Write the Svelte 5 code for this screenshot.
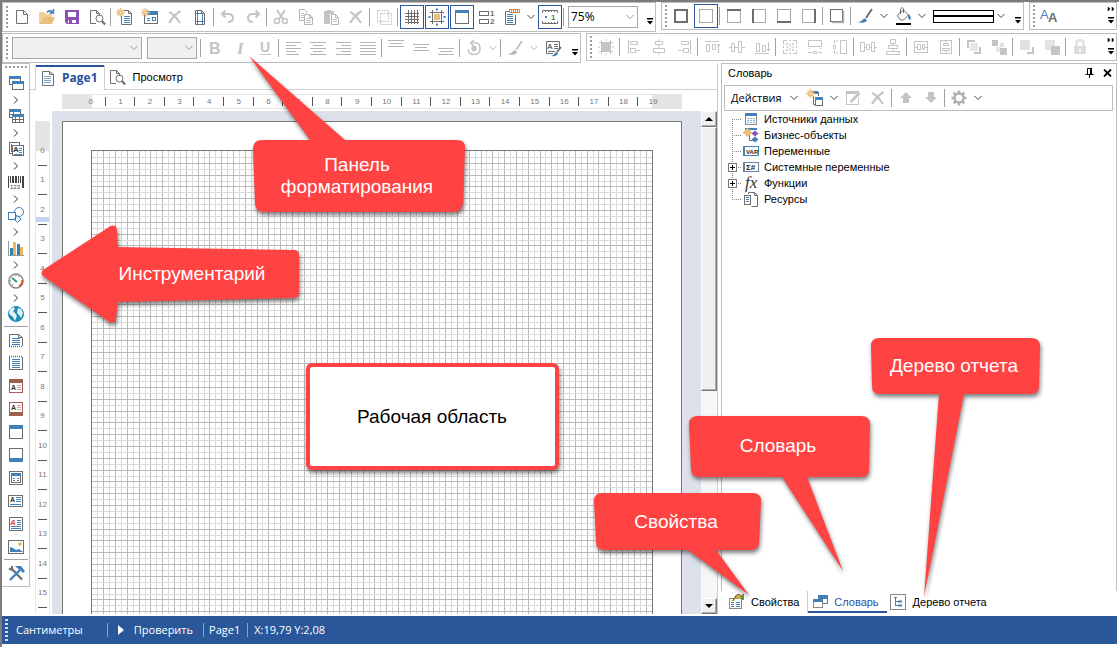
<script>
  const D = '#6e6e6e', B = '#4380b8', G = '#c4c4c4', T = '#e9bf7c';
  const s = (d, c = D, w = 1) => `<path d="${d}" fill="none" stroke="${c}" stroke-width="${w}"/>`;
  const f = (d, c = D) => `<path d="${d}" fill="${c}"/>`;
  const r = (x, y, w, h, c = D) => `<rect x="${x}" y="${y}" width="${w}" height="${h}" fill="${c}"/>`;
  const o = (x, y, w, h, c = D, bg = 'none', sw = 1) =>
    `<rect x="${x + sw / 2}" y="${y + sw / 2}" width="${w - sw}" height="${h - sw}" fill="${bg}" stroke="${c}" stroke-width="${sw}"/>`;
  const c = (x, y, q, col = D, w = 1, bg = 'none') =>
    `<circle cx="${x}" cy="${y}" r="${q}" fill="${bg}" stroke="${col}" stroke-width="${w}"/>`;
  const bars = (x, y, w, n, col = B, gap = 2) => Array.from({ length: n }, (_, i) => r(x, y + i * gap, w, 1, col)).join('');
  const star = s('M4.5 0v9M0 4.5h9M1.5 1.5l6 6M7.5 1.5l-6 6', T, 1.5) + c(4.5, 4.5, 1, T, 1, '#fff');
  const glyph = (t, x, y, size, col, extra = '') =>
    `<text x="${x}" y="${y}" font-size="${size}" fill="${col}" font-family="Liberation Sans, sans-serif" ${extra}>${t}</text>`;
  const align = (rows) => rows.map(([x, w], i) => r(x, 3 + i * 3, w, 1, '#b4b4b4')).join('');
  const edge = (x, y, w, h) => o(2, 2, 14, 14, '#a8a8a8') + r(x, y, w, h, D);
  const page = o(2, 2, 14, 14, D, '#fff');

  const icons = {
    new: s('M3.5 2.5h7l4 4v9h-11zM10.5 2.5v4h4'),
    open: f('M1 15V4h5l2 2h6v3H5z', '#f0d09a') + f('M1 16l4-7h12l-3 7z', T) + s('M9 4.5q2-3 6-.5M15.5 1v4h-4', B, 1.5),
    save: f('M2 2h14v14H4l-2-2z', '#8a50b4') + r(5, 4, 8, 5, '#fff') + r(5, 12, 8, 3, '#fff') + r(6, 12, 3, 4, '#8a50b4'),
    preview: s('M8 15.5H2.5v-13h6l3 3v2M8.5 2.5v3h3') + c(11.5, 10.5, 3.5, D, 1) + s('M14 13l3 3.5', D, 2),
    newReport: s('M5.5 8v8.5h10v-11l-3-3h-5M12.5 2.5v3h3') + bars(8, 8, 6, 4) + star,
    newForm: o(3, 3, 14, 13) + r(3, 3, 14, 4, B) + bars(6, 10, 3, 2, B) + o(11, 9, 4, 4, B) + star,
    del: s('M3 4q5 2 11 11M14.5 3Q8 7 3 15', G, 2.2),
    setup: s('M4.500 2.500h6l3 3v11h-9zM10.500 2.500v3h3') + s('M6.500 3v13M11.500 5v11M5 5.500h8M5 13.500h8', B),
    undo: s('M6.500 2.500L3 6l3.500 3.500M3.500 6H9q5 0 5 4t-5 4', G, 2),
    redo: s('M11.500 2.500L15 6l-3.500 3.500M14.500 6H9q-5 0-5 4t5 4', G, 2),
    cut: s('M5 2l6 9M13 2l-6 9', G, 2) + c(5, 13, 2.5, G, 1.6) + c(13, 13, 2.5, G, 1.6),
    copy: s('M7 12.500H2.500v-11h5l2 2v2M7.500 6.500h5l3 3v7h-8zM12.500 6.500v3h3', '#b4b4b4') + bars(4, 5, 3, 3, G) + bars(9, 10, 5, 3, G),
    paste: f('M2 3h3v-1h4v1h3v3H8v10H2z', G) + s('M9.500 6.500h4l3 3v7h-7zM13.500 6.500v3h3', '#b4b4b4') + bars(11, 11, 4, 2, G),
    select: `<g stroke-dasharray="2 1">${s('M2.500 2.500h11v11h-11zM5.500 5.500h11v11h-11z', G)}</g>`,
    grid: s('M5.500 2v14M8.500 2v14M11.500 2v14M14.500 2v14M2 5.500h14M2 8.500h14M2 11.500h14M2 14.500h14'),
    snap: s('M4.500 2v14M13.500 2v14M2 4.500h14M2 13.500h14') + r(6, 6, 6, 6, T) + s('M8 1.500h2M8 16.500h2M1.500 8v2M16.500 8v2', B, 2),
    header: o(2, 2, 14, 14, D, '#fff') + r(2, 2, 14, 3, B),
    order: o(1, 3, 10, 5) + o(1, 11, 10, 5) + glyph('1', 12, 8, 8, D, 'font-weight="bold"') + glyph('2', 12, 16, 8, D, 'font-weight="bold"'),
    report: s('M8 3.500H2.500v13h10V7') + bars(4, 6, 6, 5, B) + o(6, 1, 11, 4, '#e28743', '#fff') + s('M8.500 2v2M10.500 2v2M12.500 2v2M14.500 2v2', '#e28743'),
    ruler: s('M1.500 5V2.500h15V5M4.500 2v2M7.500 2v2M10.500 2v2M13.500 2v2M1.500 13v2.500h15V13M4.500 14v2M7.500 14v2M10.500 14v2M13.500 14v2') + r(4, 8, 2, 2, B) + glyph('1', 10, 12, 8, D, 'font-weight="bold"'),
    all: o(2, 2, 14, 14, D, 'none', 2),
    none: o(2, 2, 14, 14, '#a8a8a8'),
    top: edge(2, 2, 14, 2), left: edge(2, 2, 2, 14), bottom: edge(2, 14, 14, 2), right: edge(14, 2, 2, 14),
    shadow: o(2, 2, 13, 13) + s('M4 15.500h11.500V4', '#b4b4b4', 1.5),
    brush: s('M16 2l-6 9', D, 2) + f('M1 15q5 0 7-4l3 2q-1 4-10 2z', B),
    brushOff: s('M16 2l-6 9', G, 2) + f('M1 15q5 0 7-4l3 2q-1 4-10 2z', '#b4b4b4'),
    fill: s('M4.500 7l5-4 5 5-5 5h-3l-3-4zM6.500 7V2q2-3 3 0v4') + f('M15 7q3 4 1 6-2 0-2-5z', B) + r(2, 16, 15, 2, '#000'),
    fonts: glyph('A', 0, 12, 13, B) + glyph('A', 8, 15, 13, D, 'font-weight="bold"'),
    bold: glyph('B', 3, 15, 16, G, 'font-weight="bold"'),
    italic: `<text x="6" y="15" font-size="17" font-style="italic" font-weight="bold" fill="${G}" font-family="Liberation Serif, serif">I</text>`,
    underline: glyph('U', 4, 13, 14, G, 'font-weight="bold"') + r(4, 15, 11, 1, G),
    al: align([[2, 15], [2, 10], [2, 15], [2, 10], [2, 13]]),
    ac: align([[1, 16], [4, 10], [1, 16], [4, 10], [1, 16]]),
    ar: align([[2, 15], [7, 10], [2, 15], [7, 10], [2, 15]]),
    aj: align([[1, 16], [1, 16], [1, 16], [1, 16], [1, 16]]),
    vt: bars(1, 1, 16, 1, '#b4b4b4') + bars(3, 4, 12, 1, '#b4b4b4') + bars(1, 7, 16, 1, '#b4b4b4'),
    vm: bars(1, 5, 16, 1, '#b4b4b4') + bars(3, 8, 12, 1, '#b4b4b4') + bars(1, 11, 16, 1, '#b4b4b4'),
    vb: bars(1, 9, 16, 1, '#b4b4b4') + bars(3, 12, 12, 1, '#b4b4b4') + bars(1, 15, 16, 1, '#b4b4b4'),
    rotate: s('M6 4q9-2 9 5.500 0 6-6 6-5 0-6-5M9 1L5.500 4 9 7', G, 1.5) + c(9, 9.5, 1.500, G, 2.500),
    style: s('M9 14.500H2.500v-12h13V9') + glyph('A', 3, 10, 8, D, 'font-weight="bold"') + bars(10, 5, 4, 3, D) + bars(4, 12, 7, 1, D) + s('M17 8l-4 5', D, 2) + f('M7 17q3-1 5-4l2 1q-1 4-7 3z', B),
    toGrid: r(5, 5, 8, 8, G) + s('M4.500 2v14M13.500 2v14M2 4.500h14M2 13.500h14M9 1v2M9 15v2M1 9h2M15 9h2', G),
    mLeft: s('M3.500 2v14M5.500 3.500h7v3h-7zM5.500 10.500h5v4h-5zM15 12.500h-5', G),
    mCenter: s('M9 1v2M9 7v3M9 15v2M5.500 3.500h7v3h-7zM3.500 10.500h11v4h-11z', G),
    mRight: s('M15.500 2v14M6.500 3.500h7v3h-7zM8.500 10.500h5v4h-5zM3 12.500h5', G),
    mTop: s('M2 3.500h14M3.500 6.500h3v7h-3zM9.500 6.500h3v5h-3zM15.500 15V6M14 8l1.500-2L17 8', G),
    mMid: s('M1 9.500h2M7 9.500h3M14 9.500h3M3.500 5.500h3v8h-3zM10.500 3.500h3v11h-3z', G),
    mBot: s('M2 15.500h14M3.500 5.500h3v8h-3zM9.500 7.500h3v6h-3zM15.500 4v9M14 11l1.500 2 1.500-2', G),
    same: s('M2.500 6V2.500H6M8 2.500h2M12 2.500h3.500V6M15.500 12v3.500H12M6 15.500H2.500V12M8 15.500h2M2.500 8v2M15.500 8v2M9 5v3M9 10v3M5 9h3M10 9h3', G) + s('M5.500 5.500h1v1h-1zM11.500 5.500h1v1h-1zM5.500 11.500h1v1h-1zM11.500 11.500h1v1h-1z', G),
    sameW: s('M2.500 2.500h13v6h-13zM3 10v1M15 10v1M2 14.500h4M12 14.500h4M7.500 13.500h3v2h-3z', G),
    sameH: s('M9.500 2.500h6v13h-6zM7 3H5M7 15H5M3.500 2v4M3.500 12v4M2.500 7.500h2v3h-2z', G),
    hSpace: s('M1.500 4.500h4v9h-4zM7.500 6.500h3v5h-3zM12.500 4.500h3v9h-3zM5 9.500h2M11 9.500h1M16 9.500h2', G),
    vSpace: s('M6.500 1.500h5v4h-5zM4.500 7.500h9v3h-9zM2.500 13.500h13v3h-13zM9 5.500v2M9 11v2', G),
    cH: o(2, 3, 14, 12, G) + s('M3 9.500h2M13 9.500h2M5.500 6.500h3v5h-3zM10.500 6.500h2v5h-2z', G),
    cV: o(3, 2, 12, 14, G) + s('M9 3v2M9 13v2M6.500 5.500h5v2h-5zM5.500 10.500h7v2h-7z', G),
    front: f('M2 2h8v2H4v6H2z', G) + r(5, 5, 8, 8, '#e6e6e6') + s('M15 9v6H9', G, 2),
    back: r(2, 2, 6, 6, G) + r(6, 9, 5, 5, '#e6e6e6') + r(10, 10, 7, 7, G) + r(10, 5, 4, 4, '#e0e0e0'),
    fwd: r(2, 2, 10, 10, '#e2e2e2') + s('M15 9v6H9', G, 2),
    bwd: r(2, 2, 10, 10, '#e2e2e2') + r(8, 8, 9, 9, G),
    lock: r(3, 8, 12, 8, '#dcdcdc') + s('M5.500 8V5q0-3 3.500-3t3.500 3v3', '#dcdcdc', 2) + r(8, 11, 2, 3, '#fff'),
    bands: o(2, 2, 12, 9, D, '#fff') + r(2, 2, 12, 3, B) + o(5, 7, 12, 9, D, '#fff') + r(5, 7, 12, 3, B),
    tables: o(2, 2, 12, 9, D, '#fff') + r(2, 2, 12, 3, B) + s('M6.500 5v5M3 7.500h8') + o(5, 7, 12, 9, D, '#fff') + r(5, 7, 12, 3, B) + s('M8.500 10v6M12.500 10v6M6 12.500h10'),
    comps: o(2, 2, 11, 12, D, '#fff') + s('M4.500 4v8') + o(5, 5, 12, 11, D, '#fff') + glyph('A', 6, 12, 8, '#333', 'font-weight="bold"') + bars(12, 8, 3, 3) + bars(7, 14, 8, 1),
    barcode: s('M1.500 3v12M3.500 3v7M8.500 3v7M9.500 3v7M15.500 3v12M16.500 3v12', '#444') + s('M5.500 3v7M6.500 3v7M11.500 3v7M13.500 3v7', '#444') + glyph('123', 3, 16, 6, '#444'),
    shapes: c(12, 6, 4.5, B, 1) + o(1, 6, 8, 8, B, '#fff') + s('M10.500 10l3.500 3-3.500 3.500L7 13z', B),
    chart: s('M1.500 2v14.500H17', '#999') + r(3, 9, 3, 7, '#2a84ba') + r(6, 3, 3, 13, '#f2b45a') + r(10, 5, 3, 11, '#2a84ba') + r(13, 8, 3, 8, '#f2b45a'),
    gauge: c(9, 9, 7, '#8a8a8a', 1.6) + s('M5 6l5 4', '#2f9e77', 2) + s('M15 8q1 4-3 6', '#d65a3a', 2) + s('M9 3v1M3 9h1M5 13l1-1M12 4l-.5 1', D),
    globe: c(9, 9, 7.5, '#1c8fb0', 1, '#1c8fb0') + f('M3 4l4-2 1 2-2 2 2 2 2 3-2 5-2-4-4-3zM11 3l3 1 2 4-2 5-2-3-2-2z', '#e4f3f7'),
    title: s('M2.500 15V3.500h9l4 3V15M11.500 3.500v3h4') + bars(5, 7, 8, 4) + `<g stroke-dasharray="1 1">${s('M2 15.500h14', D, 1.5)}</g>`,
    summary: s('M2.500 3v12.500h13V3') + bars(5, 5, 8, 5) + `<g stroke-dasharray="1 1">${s('M2 2.500h14', D, 1.5)}</g>`,
    ph: o(2, 2, 14, 14, '#a0604f', '#fff') + r(2, 2, 14, 4, '#a0604f') + glyph('A', 4, 13, 7, '#333', 'font-weight="bold"') + bars(10, 8, 4, 3, '#d8a699'),
    pf: o(2, 2, 14, 14, '#a0604f', '#fff') + r(2, 12, 14, 4, '#a0604f') + glyph('A', 4, 10, 7, '#333', 'font-weight="bold"') + bars(10, 5, 4, 3, '#d8a699'),
    band1: page + r(2, 2, 14, 4, B),
    band2: page + r(2, 12, 14, 4, B),
    panel: page + o(4, 4, 10, 10, D, '#fff') + r(4, 4, 10, 3, B) + s('M6 9.500h2M10 9.500h2M6 11.500h2M10 11.500h2', B),
    text: o(1, 3, 15, 12, D, '#fff') + glyph('A', 3, 10, 7, '#333', 'font-weight="bold"') + bars(9, 5, 5, 3) + bars(3, 12, 11, 1),
    rich: page + glyph('A', 3, 10, 8, '#d14b32', 'font-weight="bold" font-style="italic"') + bars(10, 5, 4, 3) + bars(4, 11, 10, 2),
    image: o(1, 2, 16, 14, D, '#fff') + c(13, 6, 1.5, T, 1, T) + f('M3 14V9l3 1 3 2 3-1 4 3z', B),
    tools: s('M5 5l10 10.500', D, 2.2) + s('M13 6L3 16', B, 2.4) + s('M2 4.500l3 1.500V2', D, 2) + f('M8 2h6l4 5-2 2-3-3-3-2z', B),
    pageTab: s('M3.500 2.500h7l4 3v11h-11zM10.500 2.500v3h4') + bars(5, 7, 7, 4, '#7da3c8'),
    newItem: s('M7.500 7v8.500H9', D) + r(6, 2, 6, 3, B) + s('M12.500 3v4', D) + o(9, 8, 8, 9, D, '#fff') + r(9, 8, 8, 3, B) + star,
    edit: o(2, 3, 13, 13, G) + r(2, 2, 13, 3, G) + s('M15 5l-9 9', '#fff', 4) + s('M15.500 4l-9 9', G, 2.5),
    up: f('M9 3l6 6h-3v5H6V9H3z', G),
    down: f('M9 14L3 8h3V3h6v5h3z', G),
    gear: c(9, 9, 4.5, '#b0b0b0', 2.5) + s('M9 1.500V4M9 14v2.500M1.500 9H4M14 9h2.500M3.700 3.700l1.800 1.800M12.500 12.500l1.800 1.800M14.300 3.700l-1.800 1.800M5.500 12.500l-1.800 1.800', '#b0b0b0', 2.5),
    data: o(3, 3, 12, 12, '#888', '#fff') + r(3, 3, 12, 3, B) + s('M5 8.500h2M8 8.500h2M11 8.500h2M5 10.500h2M8 10.500h2M11 10.500h2M5 12.500h2M8 12.500h2M11 12.500h2', '#8fb3d6'),
    business: r(3, 2, 12, 2, B) + s('M7.500 8v6.500H12M11 8.500h2', D) + f('M5.500 2l5 4.500-5 4.500-5-4.500z', T) + f('M13 4.500l3.500 3-3.500 3-3.500-3z', '#8a50b4') + f('M13 10.500l3.500 3-3.500 3-3.500-3z', B),
    vars: o(1, 4, 16, 10, B, '#fff') + r(1, 4, 2, 10, B) + glyph('VAR', 4, 12, 6, '#222', 'font-weight="bold"'),
    sys: o(1, 4, 16, 10, '#6b7fa8', '#fff') + r(1, 4, 2, 10, '#6b7fa8') + glyph('Σ#', 4, 12, 8, '#222', 'font-weight="bold"'),
    fx: `<text x="3" y="14" font-size="17" font-style="italic" fill="#333" font-family="Liberation Serif, serif">fx</text>`,
    res: s('M6.500 4V2.500h6l3 3v11h-6M12.500 2.500v3h3') + o(2, 5, 7, 10, D, '#fff') + bars(4, 7, 3, 3),
    props: o(2, 5, 13, 11, '#888', '#fff') + s('M4 9.500h3M9 9.500h4M4 11.500h3M9 11.500h4M4 13.500h3M9 13.500h4', B) + f('M5 8l4-6q6-2 6 3l-3 1-3-1-2 3z', '#d9aa3f') + s('M5.500 8l4-6q5-2 5 3', '#6f5b2c') + r(15, 1, 2, 6, '#5b9d45'),
    dict: o(7, 2, 10, 9, B, '#fff') + r(7, 2, 10, 4, B) + o(2, 6, 10, 9, '#888', '#fff') + r(2, 6, 10, 3, B),
    tree: o(1, 1, 16, 16, '#888', '#fff') + s('M5 4.500h3M6.500 5v8M6.500 8.500h3M6.500 12.500h3', B) + s('M9 8.500h4M9 12.500h4', B, 2),
  };

  const row1a = [['new', 'Создать'], ['open', 'Открыть'], ['save', 'Сохранить'], ['preview', 'Просмотр'], '|', ['newReport', 'Новый отчет'], ['newForm', 'Новая форма'], ['del', 'Удалить страницу'], ['setup', 'Параметры страницы'], '|', ['undo', 'Отменить'], ['redo', 'Вернуть'], '|', ['cut', 'Вырезать'], ['copy', 'Копировать'], ['paste', 'Вставить'], ['del', 'Удалить'], '|', ['select', 'Выделить'], '|', ['grid', 'Сетка', 1], ['snap', 'Привязка', 1], ['header', 'Заголовки', 1], ['order', 'Порядок'], ['report', 'Отчет'], 'v', ['ruler', 'Линейки', 1], '|'];
  const row1b = [['all', 'Все границы'], ['none', 'Без границ', 1], '|', ['top', 'Сверху'], ['left', 'Слева'], ['bottom', 'Снизу'], ['right', 'Справа'], '|', ['shadow', 'Тень'], '|', ['brush', 'Цвет линии'], 'v', ['fill', 'Заливка'], 'v'];
  const row2a = ['|', ['bold', 'Полужирный'], ['italic', 'Курсив'], ['underline', 'Подчеркнутый'], '|', ['al', 'По левому краю'], ['ac', 'По центру'], ['ar', 'По правому краю'], ['aj', 'По ширине'], '|', ['vt', 'Вверх'], ['vm', 'Посередине'], ['vb', 'Вниз'], '|', ['rotate', 'Поворот'], 'v', '|', ['brushOff', 'Цвет текста'], 'v', ['style', 'Стиль']];
  const row2b = [['toGrid', 'По сетке'], '|', ['mLeft', 'Левые края'], ['mCenter', 'Центры'], ['mRight', 'Правые края'], '|', ['mTop', 'Верхние края'], ['mMid', 'Середины'], ['mBot', 'Нижние края'], '|', ['same', 'Размер'], ['sameW', 'Ширина'], ['sameH', 'Высота'], '|', ['hSpace', 'Интервал по горизонтали'], ['vSpace', 'Интервал по вертикали'], '|', ['cH', 'Центр по горизонтали'], ['cV', 'Центр по вертикали'], '|', ['front', 'На передний план'], ['back', 'На задний план'], '|', ['fwd', 'Вперед'], ['bwd', 'Назад'], '|', ['lock', 'Блокировка']];
  const side = [['bands', 'Бэнды'], 'v', ['tables', 'Таблицы'], 'v', ['comps', 'Компоненты'], 'v', ['barcode', 'Штрих-коды'], 'v', ['shapes', 'Фигуры'], 'v', ['chart', 'Диаграммы'], 'v', ['gauge', 'Индикаторы'], 'v', ['globe', 'Карты'], '|', ['title', 'Заголовок отчета'], ['summary', 'Итог отчета'], ['ph', 'Заголовок страницы'], ['pf', 'Итог страницы'], ['band1', 'Заголовок'], ['band2', 'Итог'], ['panel', 'Панель'], ['text', 'Текст'], ['rich', 'Форматированный текст'], ['image', 'Изображение'], '|', ['tools', 'Настройка']];
  const dictTools = ['v', ['newItem', 'Новый элемент'], 'v', ['edit', 'Правка'], ['del', 'Удалить элемент'], '|', ['up', 'Переместить вверх'], ['down', 'Переместить вниз'], '|', ['gear', 'Параметры'], 'v'];
  const tree = [['data', 'Источники данных'], ['business', 'Бизнес-объекты'], ['vars', 'Переменные'], ['sys', 'Системные переменные', 1], ['fx', 'Функции', 1], ['res', 'Ресурсы']];

  const hMarks = Array.from({ length: 20 }, (_, i) => i);
  const vMarks = Array.from({ length: 16 }, (_, i) => i);
  const cols = Array.from({ length: 94 }, (_, i) => i + 1).sort((a, b) => (b % 2) - (a % 2));
  const lines = Array.from({ length: 400 }, (_, i) => i + 1).sort((a, b) => (b % 2) - (a % 2));
  const shade = (i) => (i % 2 ? '#d9d9d9' : '#b9b9b9');
</script>

{#snippet icon(name)}
  <svg class="icon" width="18" height="18" viewBox="0 0 18 18" aria-hidden="true">{@html icons[name]}</svg>
{/snippet}

{#snippet chevron()}
  <svg class="chevron" width="8" height="6" viewBox="0 0 8 6" aria-hidden="true"><path d="M0.500 1L4 4.500 7.500 1" fill="none" stroke="currentColor" /></svg>
{/snippet}

{#snippet tools(list)}
  {#each list as t}
    {#if t === '|'}
      <span class="sep"></span>
    {:else if t === 'v'}
      <button class="drop" aria-label="Еще">{@render chevron()}</button>
    {:else}
      <button class="tool" class:on={t[2]} aria-label={t[1]}>{@render icon(t[0])}</button>
    {/if}
  {/each}
{/snippet}

{#snippet overflow(more)}
  <button class="overflow" aria-label="Параметры панели">
    <svg width="8" height="20" viewBox="0 0 8 20" aria-hidden="true">
      {#if more}<path d="M1 1l2 2-2 2zM5 1l2 2-2 2z" fill="#000" stroke="#000" stroke-width="0.500" />{/if}
      <path d="M1 11h6v1.500H1zM1 14h6l-3 3.500z" fill="#000" />
    </svg>
  </button>
{/snippet}

<div class="app">
  <div class="row">
    <div class="bar" role="toolbar" aria-label="Стандартная">
      <span class="grip"></span>
      {@render tools(row1a)}
      <span class="combo zoom"><select aria-label="Масштаб"><option>75%</option></select>{@render chevron()}</span>
      {@render overflow(false)}
    </div>
    <div class="bar low" role="toolbar" aria-label="Границы">
      <span class="grip"></span>
      {@render tools(row1b)}
      <button class="line" aria-label="Стиль линии"><span></span></button>
      <button class="drop" aria-label="Выбор стиля линии">{@render chevron()}</button>
      {@render overflow(false)}
    </div>
    <div class="bar low grow" role="toolbar" aria-label="Стили">
      <span class="grip"></span>
      {@render tools([['fonts', 'Шрифты']])}
      {@render overflow(true)}
    </div>
  </div>
  <div class="row">
    <div class="bar" role="toolbar" aria-label="Форматирование">
      <span class="grip"></span>
      <span class="combo family"><select aria-label="Шрифт" disabled><option></option></select>{@render chevron()}</span>
      <span class="combo size"><select aria-label="Размер шрифта" disabled><option></option></select>{@render chevron()}</span>
      <span class="faint">{@render tools(row2a)}</span>
      {@render overflow(false)}
    </div>
    <div class="bar low grow" role="toolbar" aria-label="Расположение">
      <span class="grip"></span>
      {@render tools(row2b)}
      {@render overflow(true)}
    </div>
  </div>

  <main>
    <div class="side" role="toolbar" aria-label="Инструментарий">
      <span class="grip flat"></span>
      {#each side as t}
        {#if t === '|'}
          <span class="hsep"></span>
        {:else if t === 'v'}
          <button class="more" aria-label="Еще"><svg width="6" height="8" viewBox="0 0 6 8" aria-hidden="true"><path d="M1 0.500L4.500 4 1 7.500" fill="none" stroke="#333" /></svg></button>
        {:else}
          <button class="tool short" aria-label={t[1]}>{@render icon(t[0])}</button>
        {/if}
      {/each}
    </div>

    <section class="work">
      <div class="tabs" role="tablist">
        <button class="tab active" role="tab" aria-selected="true">{@render icon('pageTab')}Page1</button>
        <button class="tab" role="tab" aria-selected="false">{@render icon('preview')}Просмотр</button>
      </div>
      <div class="hruler">
        {#each hMarks as n}<span>{n}</span>{/each}
      </div>
      <div class="body">
        <div class="vruler">
          <div class="marks">
            {#each vMarks as n}<span>{n}</span>{/each}
          </div>
          <i></i>
        </div>
        <div class="canvas">
          <div class="page">
            <svg class="grid" aria-hidden="true">
              {#each cols as i}
                <line x1="{(i / 95) * 100}%" x2="{(i / 95) * 100}%" y1="0" y2="100%" stroke={shade(i)} />
              {/each}
              {#each lines as i}
                <line x1="0" x2="100%" y1={Math.round(i * 5.9) + 0.5} y2={Math.round(i * 5.9) + 0.5} stroke={shade(i)} />
              {/each}
            </svg>
          </div>
        </div>
        <div class="scroll">
          <button aria-label="Прокрутить вверх"><svg width="8" height="4" viewBox="0 0 8 4" aria-hidden="true"><path d="M0 4l4-4 4 4z" /></svg></button>
          <div class="track"><div class="thumb"></div></div>
          <button aria-label="Прокрутить вниз"><svg width="8" height="4" viewBox="0 0 8 4" aria-hidden="true"><path d="M0 0l4 4 4-4z" /></svg></button>
        </div>
      </div>
    </section>

    <aside>
      <div class="dock">
        <header>
          <h2>Словарь</h2>
          <button aria-label="Закрепить"><svg width="9" height="10" viewBox="0 0 9 10" aria-hidden="true"><path d="M2.500 6V0.500h4V6M0.500 6.500h8M4.500 7v3" fill="none" stroke="#000" /><path d="M5 0h2v6H5z" /></svg></button>
          <button aria-label="Закрыть"><svg width="9" height="8" viewBox="0 0 9 8" aria-hidden="true"><path d="M1 0.500l7 7M8 0.500l-7 7" fill="none" stroke="#000" stroke-width="1.800" /></svg></button>
        </header>
        <div class="actions" role="toolbar" aria-label="Словарь">
          <button class="act">Действия</button>
          {@render tools(dictTools)}
        </div>
        <ul>
          {#each tree as [ic, label, plus]}
            <li>
              <span class="branch">{#if plus}<button aria-label="Развернуть: {label}"></button>{/if}</span>
              {@render icon(ic)}<span>{label}</span>
            </li>
          {/each}
        </ul>
      </div>
      <div class="switch" role="tablist">
        <button role="tab" aria-selected="false">{@render icon('props')}Свойства</button>
        <button role="tab" aria-selected="true" class="active">{@render icon('dict')}Словарь</button>
        <button role="tab" aria-selected="false">{@render icon('tree')}Дерево отчета</button>
      </div>
    </aside>
  </main>

  <footer>
    <span class="fgrip"></span>
    <button class="unit">Сантиметры</button>
    <button class="check"><svg width="6" height="10" viewBox="0 0 6 10" aria-hidden="true"><path d="M0 0l6 5-6 5z" fill="#fff" /></svg>Проверить</button>
    <span>Page1</span>
    <span>X:19,79 Y:2,08</span>
  </footer>

  <svg class="notes" width="1119" height="647" viewBox="0 0 1119 647">
    <g fill="#ff4343" class="shadow">
      <path d="M249 56L345 140H457q9 0 8 9l-2 54q-1 9-9 9H264q-9 0-9-9l-2-54q0-9 9-9h48z" />
      <path d="M43 270L109 227q7-4 8 3l1 17 176 3q5 0 5 5v37q0 6-6 6l-175 4-2 17q-2 6-8 2L43 276q-3-3 0-6z" />
      <path d="M879 338h152q9 0 9 8l-1 40q0 8-8 8h-67L924 597l15-203h-60q-7 0-7-8l-1-40q0-8 8-8z" />
      <path d="M698 416h163q9 0 9 8l-1 45q0 8-8 8h-54L843 571l-61-94h-83q-8 0-8-8l-2-45q0-8 9-8z" />
      <path d="M602 493h151q8 0 8 8l-2 41q0 8-8 8h-35L749 595l-61-45h-84q-8 0-8-8l-2-41q0-8 8-8z" />
      <rect x="308" y="365" width="249" height="103" rx="4" fill="#fff" stroke="#ff4343" stroke-width="4" />
    </g>
    <g class="note">
      <text x="357" y="171">Панель</text>
      <text x="357" y="193">форматирования</text>
      <text x="192" y="280">Инструментарий</text>
      <text x="954" y="372">Дерево отчета</text>
      <text x="778" y="452">Словарь</text>
      <text x="676" y="528">Свойства</text>
      <text x="432" y="423" fill="#000">Рабочая область</text>
    </g>
  </svg>
</div>

<style>
  :global(body) { margin: 0; background: #fff; }
  .app {
    position: relative;
    display: flex;
    flex-direction: column;
    box-sizing: border-box;
    height: 100vh;
    min-height: 640px;
    padding: 0 2px 3px 0;
    border-top: 2px solid #7d7d7d;
    border-left: 2px solid #7d7d7d;
    overflow: hidden;
    background: #fff;
    color: #000;
    font: 11px/14px "Liberation Sans", Arial, sans-serif;
  }
  button { margin: 0; padding: 0; border: 0; background: none; color: inherit; font: inherit; }
  .icon { flex: none; display: block; }
  .chevron { flex: none; display: block; color: #444; }

  .row { display: flex; align-items: flex-start; gap: 5px; height: 30px; }
  .row:first-child { margin-bottom: 1px; }
  .bar { display: flex; align-items: center; gap: 1px; box-sizing: border-box; height: 30px; border: 1px solid #bdbdbd; }
  .bar.low { height: 28px; }
  .grow { flex: 1; }
  .grip { flex: none; width: 2px; height: 22px; margin: 0 1px 0 3px; background: repeating-linear-gradient(#9d9d9d 0 2px, transparent 2px 4px); }
  .grip.flat { width: 22px; height: 2px; margin: 2px 0 3px; background: repeating-linear-gradient(90deg, #9d9d9d 0 2px, transparent 2px 4px); }
  .tool { flex: none; display: grid; place-items: center; box-sizing: border-box; width: 24px; height: 24px; }
  .tool.on { border: 1px solid #2a569a; }
  .drop { flex: none; display: grid; place-items: center; width: 12px; height: 24px; }
  .sep { flex: none; box-sizing: border-box; width: 2px; height: 18px; border-left: 1px solid #a0a0a0; }
  .faint { display: flex; align-items: center; gap: 1px; }
  .faint .chevron { color: #b4b4b4; }
  .overflow { flex: none; align-self: center; width: 10px; height: 24px; margin-left: auto; display: grid; place-items: center; }
  .combo { position: relative; flex: none; height: 22px; }
  .combo select { appearance: none; box-sizing: border-box; width: 100%; height: 100%; padding: 0 4px 0 2px; border: 1px solid #a8a8a8; border-radius: 0; background: #fff; color: #000; font: 12px/16px "Open Sans", "Noto Sans", sans-serif; opacity: 1; }
  .combo select:disabled { background: #f0f0f0; }
  .combo .chevron { position: absolute; right: 4px; top: 8px; color: #999; pointer-events: none; }
  .zoom { width: 70px; margin: 0 2px; }
  .family { width: 130px; margin: 0 4px 0 2px; }
  .size { width: 50px; margin-right: 2px; }
  .line { width: 61px; height: 13px; margin-left: 4px; box-sizing: border-box; border: 1px solid #000; display: flex; align-items: center; }
  .line span { flex: 1; height: 2px; background: #000; }
  .row .bar:first-child .overflow { margin-left: 4px; }
  .row .bar.low:not(.grow) .overflow { margin-left: 5px; }

  main { display: flex; flex: 1; min-height: 0; margin-bottom: 2px; }
  .side { align-self: flex-start; flex: none; display: flex; flex-direction: column; align-items: center; gap: 1px; width: 27px; padding-bottom: 2px; border: 1px solid #bdbdbd; border-left: 0; }
  .short { height: 22px; }
  .more { display: grid; place-items: center; width: 24px; height: 9px; }
  .hsep { width: 24px; height: 2px; box-sizing: border-box; border-top: 1px solid #a0a0a0; }

  .work { flex: 1; min-width: 0; display: flex; flex-direction: column; margin-right: 3px; border-right: 1px solid #ccc; }
  .tabs { display: flex; height: 27px; padding: 2px 0 0 5px; box-sizing: border-box; border-bottom: 1px solid #d0d0d0; }
  .tab { display: flex; align-items: center; gap: 7px; padding: 0 0 0 3px; }
  .tab.active { gap: 5px; margin-bottom: -1px; padding: 0 6px 0 3px; border: solid #d0d0d0; border-width: 0 1px; box-shadow: inset 0 2px #2a569a; background: #fff; color: #2a4f9e; font: bold 12px/14px "Open Sans", "Noto Sans", sans-serif; }
  .hruler { display: flex; height: 13px; margin: 4px 36px 2px 32px; margin-right: 35px; padding: 0 14px; border: solid #e6e6e6; border-width: 1px 0; background: linear-gradient(#e4e4e4, #e4e4e4) left / 30px 100% no-repeat, linear-gradient(#e4e4e4, #e4e4e4) right / 30px 100% no-repeat; }
  .hruler span { flex: 1 1 0; text-align: center; color: #777; font-size: 8px; line-height: 13px; background: linear-gradient(#555, #555) right / 1px 9px no-repeat; }
  .hruler span:last-child { background: none; }
  .body { flex: 1; min-height: 0; display: flex; }
  .vruler { position: relative; flex: none; box-sizing: border-box; width: 15px; margin: 10px 2px 0 5px; border: solid #e6e6e6; border-width: 0 1px; overflow: hidden; background: linear-gradient(#e4e4e4, #e4e4e4) top / 100% 30px no-repeat; }
  .marks { display: flex; flex-direction: column; height: 472px; margin-top: 15px; }
  .marks span { flex: 1 1 0; display: grid; place-items: center; color: #777; font-size: 8px; line-height: 10px; background: linear-gradient(#555, #555) bottom / 9px 1px no-repeat; }
  .vruler i { position: absolute; left: 0; right: 0; top: 96px; height: 5px; background: #c3d4f3; }
  .canvas { flex: 1; min-width: 0; display: flex; padding: 10px 19px 0 10px; background: #dde1e9; overflow: hidden; }
  .page { flex: 1; display: flex; padding: 28px 28px 0; border: 1px solid #777; border-bottom: 0; background: #fff; overflow: hidden; }
  .grid { flex: 1; min-width: 0; height: 100%; box-sizing: border-box; border: 1px solid #777; border-bottom: 0; shape-rendering: crispEdges; }
  .scroll { flex: none; width: 16px; display: flex; flex-direction: column; background: #f4f4f4; }
  .scroll button, .thumb { box-sizing: border-box; border: 1px solid; border-color: #fff #777 #777 #fff; background: #f0f0f0; box-shadow: inset -1px -1px #b0b0b0; }
  .scroll button { flex: none; display: grid; place-items: center; height: 16px; }
  .track { flex: 1; background: repeating-conic-gradient(#fff 0 25%, #eee 0 50%) 0 0 / 2px 2px; }
  .thumb { height: 56%; }

  aside { flex: none; width: 396px; display: flex; flex-direction: column; }
  .dock { flex: 1; min-height: 0; border: solid #bdbdbd; border-width: 1px 1px 0; }
  header { display: flex; align-items: center; gap: 9px; height: 18px; padding: 0 4px 0 6px; }
  h2 { flex: 1; margin: 0; font: inherit; }
  header button { display: grid; place-items: center; height: 14px; }
  .actions { display: flex; align-items: center; gap: 1px; height: 24px; margin: 3px 3px 0 2px; padding-left: 6px; border: 1px solid #bdbdbd; }
  .act { margin-right: 5px; font: 11px/16px "Open Sans", "Noto Sans", sans-serif; }
  .actions .drop:nth-child(2) { margin-right: 2px; }
  ul { list-style: none; margin: 0; padding: 0 0 0 10px; }
  li { display: flex; align-items: center; height: 16px; }
  li > span:last-child { margin-left: 4px; }
  .branch { position: relative; width: 10px; height: 16px; background: repeating-linear-gradient(#888 0 1px, transparent 1px 2px) left / 1px 100% no-repeat, repeating-linear-gradient(90deg, #888 0 1px, transparent 1px 2px) left 8px / 100% 1px no-repeat; }
  li:first-child .branch { background-position: 0 8px, 0 8px; }
  li:last-child .branch { background-size: 1px 8px, 100% 1px; background-position: 0 0, 0 8px; }
  .branch button { position: absolute; left: -4px; top: 4px; width: 9px; height: 9px; border: 1px solid #777; background: linear-gradient(#000, #000) center / 5px 1px no-repeat, linear-gradient(#000, #000) center / 1px 5px no-repeat, #fff; }
  .switch { display: flex; height: 22px; margin-bottom: 1px; padding-left: 6px; }
  .switch button { display: flex; align-items: center; gap: 6px; padding-right: 8px; }
  .switch .active { gap: 5px; padding: 0 8px 0 3px; margin-right: 2px; border: solid #ccc; border-width: 0 0 0 1px; box-shadow: inset 0 -2px #2a569a; color: #2a4f9e; }

  footer { flex: none; display: flex; align-items: center; height: 28px; background: #2a579a; color: #fff; font: 11px/16px "Open Sans", "Noto Sans", sans-serif; }
  .fgrip { width: 3px; height: 22px; margin: 0 8px 0 3px; background: repeating-linear-gradient(#d5deec 0 2px, transparent 2px 4px); }
  footer > button, footer > span:not(.fgrip) { line-height: 14px; }
  .unit { padding-right: 24px; }
  .check { display: flex; align-items: center; gap: 10px; padding: 0 10px; border: solid #8aa3c9; border-width: 0 1px; }
  footer > span:nth-child(4) { padding: 0 7px 0 5px; border-right: 1px solid #8aa3c9; }
  footer > span:last-child { padding-left: 6px; }

  .notes { position: absolute; left: -2px; top: -2px; pointer-events: none; }
  .shadow > * { filter: drop-shadow(1px 3px 2px rgb(0 0 0 / 0.5)); }
  .note { fill: #fff; font: 19px "Liberation Sans", Arial, sans-serif; text-anchor: middle; }
</style>
